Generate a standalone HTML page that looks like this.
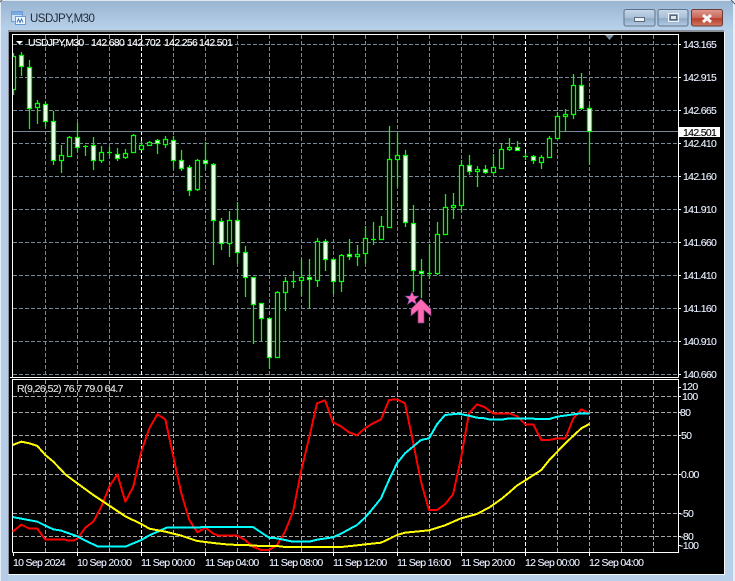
<!DOCTYPE html>
<html>
<head>
<meta charset="utf-8">
<title>USDJPY,M30</title>
<style>
html,body{margin:0;padding:0;background:#b8d0ea;width:735px;height:581px;overflow:hidden}
svg{display:block}
text{font-family:"Liberation Sans",sans-serif;font-size:10.5px;letter-spacing:-.68px;fill:#fff;stroke:#fff;stroke-width:.12}
.c{shape-rendering:crispEdges}
text.s{fill:#e4e4e4;stroke:#e4e4e4;letter-spacing:-.55px}
text.t{fill:#e8f0ff;stroke:#e8f0ff}
</style>
</head>
<body>
<svg width="735" height="581" viewBox="0 0 735 581" xmlns="http://www.w3.org/2000/svg">
<defs>
<linearGradient id="tb" x1="0" y1="0" x2="0" y2="1"><stop offset="0" stop-color="#98b4d0"/><stop offset="1" stop-color="#bad2ec"/></linearGradient>
<linearGradient id="btn" x1="0" y1="0" x2="0" y2="1"><stop offset="0" stop-color="#c6d6e8"/><stop offset=".5" stop-color="#a9c0d8"/><stop offset=".55" stop-color="#8fabc8"/><stop offset="1" stop-color="#b4cbe2"/></linearGradient>
<linearGradient id="cls" x1="0" y1="0" x2="0" y2="1"><stop offset="0" stop-color="#dd9a90"/><stop offset=".5" stop-color="#c9675a"/><stop offset=".55" stop-color="#b83c2c"/><stop offset="1" stop-color="#cf7a60"/></linearGradient>
<clipPath id="main"><rect x="13" y="35" width="665" height="342"/></clipPath>
</defs>

<!-- window chrome -->
<rect width="735" height="581" fill="#b8d0ea"/>
<rect width="735" height="31" fill="url(#tb)"/>
<rect x="0" y="0" width="735" height="1" fill="#dfe8f2"/>
<rect x="0" y="0" width="1" height="581" fill="#e4edf6"/>
<rect x="733" y="0" width="2" height="581" fill="#e8eef5"/>
<path d="M0 2L2 0M731 0L735 4" stroke="#5a5f66" stroke-width="1" fill="none"/>
<rect x="1" y="30" width="7" height="551" fill="#b5cde8"/>
<rect x="8" y="30" width="716" height="2" fill="#8a8f96" class="c"/>
<rect x="8" y="30" width="1" height="544" fill="#8a8f96" class="c"/>
<rect x="9" y="32" width="715" height="542" fill="#000" class="c"/>
<rect x="724" y="32" width="1" height="543" fill="#f4f7fb" class="c"/>
<rect x="8" y="574" width="717" height="1" fill="#f4f7fb" class="c"/>

<!-- title icon -->
<g class="c">
<rect x="11.500" y="11.500" width="11" height="10" fill="#cfe3f7" stroke="#6a9bd6"/>
<rect x="12" y="12" width="10" height="3" fill="#7aaae2"/>
<rect x="15.500" y="16.500" width="10" height="8" fill="#f0f7fd" stroke="#6a9bd6"/>
</g>
<path d="M17 22.500l1.500-3.500 1.500 3.500 1.500-3.500 1.500 3.500" fill="none" stroke="#2c6ab8" stroke-width=".9"/>
<text x="30" y="22" style="font-size:11.500px;letter-spacing:-.5px;fill:#1e2a38;stroke:none">USDJPY,M30</text>

<!-- caption buttons -->
<rect x="624" y="9.500" width="31" height="16.500" rx="2" fill="url(#btn)" stroke="#5f7488"/>
<rect x="658" y="9.500" width="30" height="16.500" rx="2" fill="url(#btn)" stroke="#5f7488"/>
<rect x="691.500" y="9.500" width="31" height="16.500" rx="2" fill="url(#cls)" stroke="#6e3a36"/>
<rect x="634.500" y="17.500" width="10" height="4" fill="#eef2f6" stroke="#5a6c80" class="c"/>
<rect x="668.500" y="13.500" width="10" height="8" fill="none" stroke="#eef2f6" stroke-width="1" class="c"/>
<rect x="669.500" y="14.500" width="8" height="6" fill="#55677c" class="c"/>
<rect x="671" y="16" width="5" height="3" fill="#dfe6ee" class="c"/>
<path d="M703 15l8 7M711 15l-8 7" stroke="#f5f5f5" stroke-width="3" fill="none"/>

<!-- grid -->
<g class="c" fill="none" stroke-width="1">
<path stroke="#778899" stroke-dasharray="4 2" d="M13 44.500H678M13 77.500H678M13 110.500H678M13 143.500H678M13 176.500H678M13 209.500H678M13 242.500H678M13 275.500H678M13 308.500H678M13 341.500H678M13 374.500H678"/>
<path stroke="#778899" stroke-dasharray="4 2" d="M45.500 35V377M77.500 35V377M109.500 35V377M173.500 35V377M205.500 35V377M237.500 35V377M269.500 35V377M301.500 35V377M333.500 35V377M365.500 35V377M397.500 35V377M429.500 35V377M461.500 35V377M493.500 35V377M557.500 35V377M589.500 35V377M621.500 35V377M653.500 35V377"/>
<path stroke="#fff" stroke-dasharray="4 2" d="M141.500 35V377M525.500 35V377"/>
<path stroke="#a6a6a6" stroke-dasharray="4 2" d="M13 396.500H678M13 412.500H678M13 435.500H678M13 474.500H678M13 513.500H678M13 536.500H678"/>
<path stroke="#a6a6a6" stroke-dasharray="4 2" d="M45.500 380V552M77.500 380V552M109.500 380V552M173.500 380V552M205.500 380V552M237.500 380V552M269.500 380V552M301.500 380V552M333.500 380V552M365.500 380V552M397.500 380V552M429.500 380V552M461.500 380V552M493.500 380V552M557.500 380V552M589.500 380V552M621.500 380V552M653.500 380V552"/>
<path stroke="#fff" stroke-dasharray="4 2" d="M141.500 380V552M525.500 380V552"/>
<path stroke="#778899" d="M13 131.500H678"/>
</g>

<!-- candles -->
<g clip-path="url(#main)" fill="none" stroke="#00ff00" stroke-width="1.250">
<path d="M13.500 53V95M21.500 52V76M29.500 60V129M37.500 100V124M45.500 102V127M53.500 111V165M61.500 145V173M69.500 136V157M77.500 123V152M85.500 145V156M93.500 137V170M101.500 146V163M109.500 147V156M117.500 148V161M125.500 149V159M133.500 134V152M141.500 141V150M149.500 141V146M157.500 139V154M165.500 136V148M173.500 136V169M181.500 150V171M189.500 165V196M197.500 159V191M205.500 142V169M213.500 163V265M221.500 218V250M229.500 211V257M237.500 202V264M245.500 246V297M253.500 277V344M261.500 303V341M269.500 318V369M277.500 291V357M285.500 277V311M293.500 271V288M301.500 259V296M309.500 259V308M317.500 238V287M325.500 239V271M333.500 259V294M341.500 254V292M349.500 239V260M357.500 245V266M365.500 226V264M373.500 222V245M381.500 216V239M389.500 126V228M397.500 133V187M405.500 150V227M413.500 205V292M421.500 259V298M429.500 244V279M437.500 222V275M445.500 194V234M453.500 193V219M461.500 160V212M469.500 155V175M477.500 166V187M485.500 165V174M493.500 154V174M501.500 143V169M509.500 138V151M517.500 141V151M525.500 153V160M533.500 155V164M541.500 155V169M549.500 136V158M557.500 112V139M565.500 109V131M573.500 74V119M581.500 73V110M589.500 105V165"/>
<path d="M83 146.500h5M107 152.500h5M291 281.500h5M371 239.500h5M427 273.500h5M523 156.500h5"/>
<path fill="#000" d="M11.500 56.500h4v33h-4zM35.500 103.500h4v4h-4zM59.500 155.500h4v5h-4zM67.500 137.500h4v19h-4zM99.500 152.500h4v8h-4zM123.500 153.500h4v4h-4zM131.500 135.500h4v17h-4zM139.500 145.500h4v4h-4zM147.500 142.500h4v3h-4zM163.500 139.500h4v5h-4zM195.500 160.500h4v29h-4zM227.500 220.500h4v23h-4zM275.500 292.500h4v65h-4zM283.500 281.500h4v11h-4zM299.500 277.500h4v3h-4zM315.500 241.500h4v39h-4zM339.500 255.500h4v26h-4zM355.500 254.500h4v2h-4zM363.500 238.500h4v15h-4zM379.500 226.500h4v13h-4zM387.500 159.500h4v68h-4zM395.500 155.500h4v4h-4zM435.500 234.500h4v39h-4zM443.500 207.500h4v27h-4zM451.500 205.500h4v2h-4zM459.500 165.500h4v40h-4zM475.500 169.500h4v2h-4zM491.500 167.500h4v5h-4zM499.500 149.500h4v19h-4zM507.500 147.500h4v2h-4zM539.500 157.500h4v5h-4zM547.500 138.500h4v19h-4zM555.500 116.500h4v22h-4zM563.500 114.500h4v2h-4zM571.500 85.500h4v29h-4z"/>
<path fill="#fff" d="M19.500 55.500h4v11h-4zM27.500 67.500h4v41h-4zM43.500 104.500h4v17h-4zM51.500 121.500h4v39h-4zM75.500 137.500h4v10h-4zM91.500 145.500h4v15h-4zM115.500 154.500h4v4h-4zM155.500 140.500h4v3h-4zM171.500 140.500h4v20h-4zM179.500 160.500h4v8h-4zM187.500 167.500h4v23h-4zM203.500 160.500h4v3h-4zM211.500 164.500h4v56h-4zM219.500 221.500h4v22h-4zM235.500 220.500h4v32h-4zM243.500 252.500h4v25h-4zM251.500 277.500h4v27h-4zM259.500 303.500h4v15h-4zM267.500 318.500h4v39h-4zM307.500 277.500h4v2h-4zM323.500 241.500h4v18h-4zM331.500 259.500h4v22h-4zM347.500 254.500h4v2h-4zM403.500 155.500h4v67h-4zM411.500 223.500h4v47h-4zM419.500 271.500h4v2h-4zM467.500 165.500h4v6h-4zM483.500 169.500h4v3h-4zM515.500 147.500h4v3h-4zM531.500 156.500h4v4h-4zM579.500 85.500h4v23h-4zM587.500 108.500h4v23h-4z"/>
</g>

<!-- star + arrow -->
<polygon points="412,291.500 414,296 419,296 415,299.500 416.500,304.500 412,301.500 407.500,304.500 409,299.500 405,296 410,296" fill="#ff69b4" stroke="#4a3fa0" stroke-width=".6"/>
<polygon points="421,299 431,309 431,316 424,310 424,323 418,323 418,310 411,316 411,309" fill="#ff69b4" stroke="#7a3a7a" stroke-width=".7"/>

<!-- frames -->
<g class="c" fill="none" stroke="#fff" stroke-width="1">
<path d="M12.500 377.500V34.500H678.500V377.500M10 377.500H678.500"/>
<path d="M12.500 552.500V379.500H678.500V552.500H12.500"/>
<path d="M678 44.500h3M678 77.500h3M678 110.500h3M678 143.500h3M678 176.500h3M678 209.500h3M678 242.500h3M678 275.500h3M678 308.500h3M678 341.500h3M678 374.500h3"/>
<path d="M678 387.500h3M678 396.500h3M678 412.500h3M678 435.500h3M678 474.500h3M678 513.500h3M678 536.500h3M678 545.500h3"/>
<path d="M13.500 552V556M77.500 552V556M141.500 552V556M205.500 552V556M269.500 552V556M333.500 552V556M397.500 552V556M461.500 552V556M525.500 552V556M589.500 552V556"/>
</g>
<polygon points="605,35 614,35 609.500,40" fill="#778899"/>
<polygon points="16,41 23,41 19.500,44.500" fill="#fff"/>

<!-- indicator lines (coordinates at 3x) -->
<g fill="none" stroke-width="2" stroke-linejoin="round" shape-rendering="crispEdges">
<polyline stroke="#ff0000" vector-effect="non-scaling-stroke" transform="translate(0 375) scale(.33333)" points="38,470 64,449 88,461 112,461 136,494 196,494 204,497 220,497 232,491 256,458 280,440 304,395 328,335 352,298 376,380 400,335 424,230 448,160 472,118 496,133 520,245 544,355 568,435 592,472 616,458 640,476 656,482 712,482 735,495 759,515 783,525 807,525 831,510 855,470 879,410 903,290 927,190 951,85 975,76 999,142 1023,154 1047,172 1071,181 1095,160 1119,145 1143,133 1167,75 1191,73 1215,85 1239,200 1263,320 1287,405 1311,405 1335,388 1359,358 1383,250 1407,115 1431,88 1455,97 1470,109 1480,115 1528,115 1552,124 1576,148 1600,148 1624,195 1648,195 1672,190 1696,190 1720,130 1744,103 1768,115"/>
<polyline stroke="#00ffff" vector-effect="non-scaling-stroke" transform="translate(0 375) scale(.33333)" points="38,426 64,431 112,440 136,452 160,463 184,467 232,484 256,497 295,515 376,515 400,505 424,495 448,481 500,458 590,458 610,456 735,456 759,456 807,488 831,490 879,500 927,500 951,494 999,487 1023,476 1071,450 1095,428 1119,400 1143,370 1167,315 1191,265 1215,235 1263,195 1287,190 1311,148 1335,120 1375,116 1407,122 1431,128 1455,130 1470,134 1504,134 1528,130 1600,130 1604,132 1648,132 1672,125 1720,118 1744,115 1768,115"/>
<polyline stroke="#ffff00" vector-effect="non-scaling-stroke" transform="translate(0 375) scale(.33333)" points="38,210 64,200 88,205 112,213 136,240 160,260 196,298 232,325 280,360 328,392 376,424 424,447 448,461 496,470 544,482 592,498 640,504 688,509 735,510 783,513 831,513 855,516 1023,516 1071,511 1143,503 1167,492 1191,480 1215,473 1287,466 1335,451 1383,430 1431,417 1470,396 1504,372 1528,352 1552,331 1576,316 1624,285 1648,255 1696,205 1744,160 1768,147"/>
</g>

<!-- price box -->
<rect x="679" y="127" width="41" height="10" fill="#fff" class="c"/>
<text x="683" y="136" style="fill:#000;stroke:#000">142.501</text>

<!-- header texts -->
<text x="28" y="46" style="letter-spacing:-.8px">USDJPY,M30</text>
<text x="91" y="46">142.680</text>
<text x="127" y="46">142.702</text>
<text x="164" y="46">142.256</text>
<text x="199" y="46">142.501</text>
<text x="17" y="392" class="s">R(9,26,52) 76.7 79.0 64.7</text>

<!-- price scale -->
<text x="683" y="48" class="t">143.165</text>
<text x="683" y="81" class="t">142.915</text>
<text x="683" y="114" class="t">142.665</text>
<text x="683" y="147" class="t">142.410</text>
<text x="683" y="180" class="t">142.160</text>
<text x="683" y="213" class="t">141.910</text>
<text x="683" y="246" class="t">141.660</text>
<text x="683" y="279" class="t">141.410</text>
<text x="683" y="312" class="t">141.160</text>
<text x="683" y="345" class="t">140.910</text>
<text x="683" y="378" class="t">140.660</text>
<text x="682" y="390" class="t">120</text>
<text x="682" y="400" class="t">100</text>
<text x="680" y="416" class="t">80</text>
<text x="681" y="439" class="t">50</text>
<text x="681" y="478" class="t">0.00</text>
<text x="680" y="517" class="t">-50</text>
<text x="680" y="540" class="t">-80</text>
<text x="680" y="549" class="t">-100</text>

<!-- time axis -->
<text x="13" y="566" class="t">10 Sep 2024</text>
<text x="77" y="566" class="t">10 Sep 20:00</text>
<text x="141" y="566" class="t">11 Sep 00:00</text>
<text x="205" y="566" class="t">11 Sep 04:00</text>
<text x="269" y="566" class="t">11 Sep 08:00</text>
<text x="333" y="566" class="t">11 Sep 12:00</text>
<text x="397" y="566" class="t">11 Sep 16:00</text>
<text x="461" y="566" class="t">11 Sep 20:00</text>
<text x="525" y="566" class="t">12 Sep 00:00</text>
<text x="589" y="566" class="t">12 Sep 04:00</text>
</svg>
</body>
</html>
